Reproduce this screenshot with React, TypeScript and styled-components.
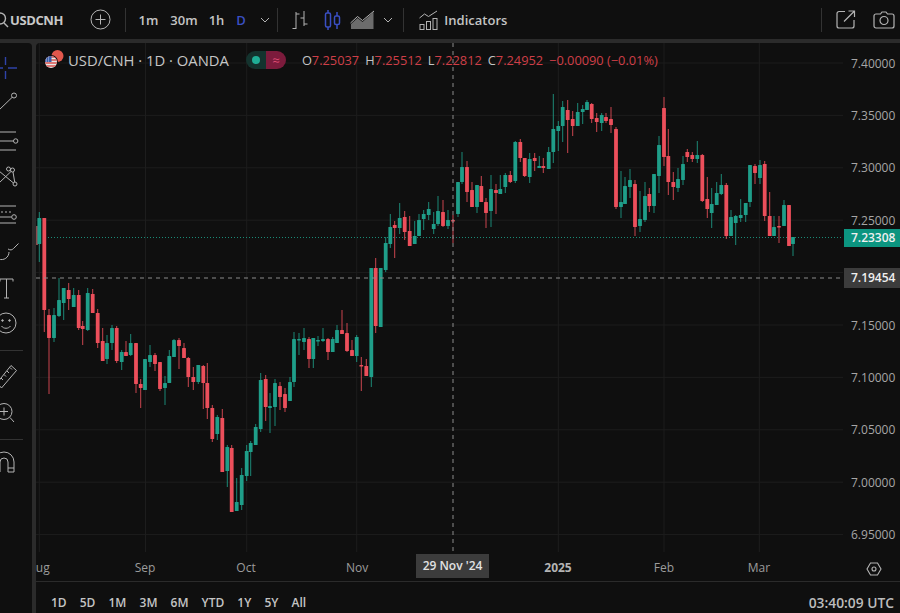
import React from "react";
import styled, { createGlobalStyle } from "styled-components";

const FONT = `"Open Sans", "Noto Sans", "Liberation Sans", sans-serif`;
const GREEN = "#1f9e89";
const RED = "#ec4f5b";
const ICON = "#b4b4b4";
const BLUE = "#3a4fc4";

const GlobalStyle = createGlobalStyle`
  html, body { margin: 0; padding: 0; background: #2b2b2b; }
  * { box-sizing: border-box; }
`;

const Page = styled.div`
  width: 900px;
  height: 613px;
  overflow: hidden;
  display: flex;
  flex-direction: column;
  gap: 4px;
  background: #2b2b2b;
  font-family: ${FONT};
  color: #c4c4c4;
`;

const TopBar = styled.header`
  height: 39px;
  flex: none;
  display: flex;
  align-items: center;
  background: #0f0f0f;
  overflow: hidden;
`;

const SearchClip = styled.svg`
  width: 10px;
  height: 18px;
  flex: none;
`;

const Symbol = styled.span`
  font-size: 13px;
  font-weight: 700;
  letter-spacing: -0.4px;
  color: #c8c8c8;
  width: 79px;
  flex: none;
`;

const IconButton = styled.button<{ $w: number; $mr?: number }>`
  all: unset;
  display: flex;
  align-items: center;
  justify-content: center;
  flex: none;
  width: ${(p) => p.$w}px;
  height: 39px;
  margin-right: ${(p) => p.$mr ?? 0}px;
`;

const Divider = styled.div<{ $mr: number }>`
  width: 1px;
  height: 24px;
  flex: none;
  background: #333;
  margin-right: ${(p) => p.$mr}px;
`;

const Interval = styled.span<{ $active?: boolean; $mr: number }>`
  font-size: 13px;
  font-weight: 600;
  flex: none;
  margin-right: ${(p) => p.$mr}px;
  color: ${(p) => (p.$active ? BLUE : "#c4c4c4")};
`;

const IndicatorsLabel = styled.span`
  font-size: 13px;
  font-weight: 600;
  color: #c4c4c4;
  flex: none;
`;

const Spacer = styled.div`
  flex: 1;
`;

const Body = styled.div`
  flex: 1;
  min-height: 0;
  display: flex;
  gap: 4px;
`;

const ToolBar = styled.nav`
  width: 32px;
  flex: none;
  background: #0f0f0f;
  border-radius: 0 4px 0 0;
  overflow: hidden;
  padding-top: 6.75px;
  display: flex;
  flex-direction: column;
`;

const ToolSlot = styled.svg`
  width: 32px;
  height: 36.5px;
  flex: none;
  display: block;
  overflow: hidden;
`;

const ToolDivider = styled.div`
  width: 23px;
  height: 1px;
  flex: none;
  margin: 8px 0 7px;
  background: #333;
`;

const ChartColumn = styled.main`
  flex: 1;
  min-width: 0;
  display: flex;
  flex-direction: column;
  background: #0f0f0f;
  border-radius: 4px 0 0 0;
  overflow: hidden;
`;

const ChartRow = styled.div`
  height: 509px;
  flex: none;
  display: flex;
`;

const Plot = styled.div`
  width: 807px;
  flex: none;
  position: relative;
`;

const PlotSvg = styled.svg`
  display: block;
  width: 807px;
  height: 509px;
`;

const Legend = styled.div`
  position: absolute;
  left: 8px;
  top: 7px;
  height: 20px;
  display: flex;
  align-items: center;
`;

const LegendTitle = styled.span`
  font-size: 14.8px;
  color: #c6c6c6;
  margin: 0 17px 0 4px;
  white-space: nowrap;
`;

const StatusPill = styled.div`
  width: 40px;
  height: 18px;
  border-radius: 9px;
  overflow: hidden;
  display: flex;
  margin-right: 16px;
  flex: none;
`;

const PillGreen = styled.div`
  width: 20px;
  background: #14332e;
  display: flex;
  align-items: center;
  justify-content: center;
`;

const PillDot = styled.i`
  width: 8px;
  height: 8px;
  border-radius: 50%;
  background: #1fae96;
`;

const PillRed = styled.div`
  flex: 1;
  background: #7c1b3c;
  color: #dc4a72;
  font-size: 13px;
  line-height: 18px;
  text-align: center;
`;

const Ohlc = styled.span`
  font-size: 12.8px;
  white-space: nowrap;
  margin-right: 6px;
  color: #c4c4c4;
`;

const OhlcValue = styled.span`
  color: #cf3f48;
`;

const PriceAxis = styled.aside`
  width: 57px;
  flex: none;
  position: relative;
  padding-top: 9.6px;
`;

const PriceTick = styled.div`
  height: 52.4px;
  line-height: 22px;
  padding-left: 8px;
  font-size: 12px;
  color: #a6a6a6;
`;

const PriceBadge = styled.div<{ $bg: string; $top: number; $h: number }>`
  position: absolute;
  left: 1px;
  right: 0;
  top: ${(p) => p.$top}px;
  height: ${(p) => p.$h}px;
  line-height: ${(p) => p.$h}px;
  padding-left: 7px;
  font-size: 12px;
  font-weight: 600;
  color: #f0f0f0;
  background: ${(p) => p.$bg};
`;

const TimeAxis = styled.div`
  height: 30px;
  flex: none;
  position: relative;
  border-bottom: 1px solid #2b2b2b;
`;

const TimeTick = styled.span<{ $strong?: boolean }>`
  position: absolute;
  top: 7px;
  transform: translateX(-50%);
  font-size: 12px;
  line-height: 18px;
  color: ${(p) => (p.$strong ? "#b4b4b4" : "#9c9c9c")};
  font-weight: ${(p) => (p.$strong ? 700 : 400)};
`;

const TimeTag = styled.span`
  position: absolute;
  left: 380px;
  top: 2px;
  width: 73px;
  height: 24px;
  line-height: 24px;
  text-align: center;
  font-size: 12px;
  font-weight: 600;
  color: #e2e2e2;
  background: #3c3c3c;
`;

const SettingsIcon = styled.svg`
  position: absolute;
  left: 830px;
  top: 9px;
  width: 16px;
  height: 16px;
`;

const BottomBar = styled.footer`
  height: 30px;
  flex: none;
  display: flex;
  align-items: center;
  padding: 10px 6px 0 15px;
  gap: 13.1px;
`;

const Range = styled.span`
  font-size: 12px;
  font-weight: 600;
  color: #c4c4c4;
`;

const Clock = styled.span`
  margin-left: auto;
  font-size: 13.8px;
  font-weight: 600;
  color: #bcbcbc;
`;

// [x, high, body top, body bottom, low, up?] in page pixels, read off the picture
type Candle = [number, number, number, number, number, number];

const CANDLES: Candle[] = [
  [39.3, 212, 218, 244, 262, 1], [44.3, 218, 218, 310, 332, 0], [49, 309, 315, 338, 394, 0], [54, 308, 315, 338, 342, 1],
  [59, 278, 300, 316, 317, 1], [63.7, 288, 288, 303, 320, 1], [68.7, 283, 290, 299, 310, 0], [73.7, 288, 295, 307, 307, 1],
  [78.7, 290, 295, 328, 330, 0], [82.7, 321, 326, 329, 345, 0], [87.7, 288, 293, 330, 331, 1], [92.7, 289, 294, 313, 313, 0],
  [97.7, 309, 313, 343, 348, 0], [102.7, 328, 341, 361, 361, 0], [107, 335, 343, 359, 364, 1], [112, 325, 328, 343, 350, 1],
  [116.7, 326, 328, 361, 363, 0], [121.7, 350, 352, 362, 370, 1], [126, 341, 352, 356, 356, 0], [130.7, 334, 343, 355, 356, 1],
  [136, 343, 343, 384, 393, 0], [140.7, 379, 384, 388, 408, 0], [145, 359, 359, 390, 390, 1], [150, 345, 355, 362, 367, 1],
  [155, 353, 355, 364, 371, 0], [160, 362, 362, 389, 391, 0], [165, 376, 383, 388, 405, 1], [169.3, 350, 356, 383, 383, 1],
  [174, 339, 340, 357, 357, 1], [179, 338, 340, 346, 369, 0], [184, 343, 348, 358, 358, 0], [188.3, 357, 358, 377, 387, 0],
  [193.3, 367, 377, 382, 390, 0], [198.3, 365, 365, 382, 384, 1], [203.3, 365, 366, 383, 409, 0], [207.3, 363, 383, 408, 419, 0],
  [212.3, 405, 408, 439, 442, 0], [217.3, 415, 417, 434, 440, 1], [222.3, 409, 418, 472, 472, 0], [227.3, 445, 447, 471, 487, 1],
  [231.7, 445, 448, 512, 512, 0], [236.7, 478, 502, 511, 511, 1], [241.7, 468, 475, 505, 510, 1], [246.7, 445, 451, 476, 481, 1],
  [250.7, 441, 443, 452, 476, 1], [255.7, 424, 427, 445, 445, 1], [260.7, 373, 380, 429, 432, 1], [265.7, 375, 379, 407, 421, 0],
  [270, 393, 406, 408, 433, 1], [275, 379, 383, 407, 426, 1], [280, 382, 386, 397, 410, 0], [285, 388, 394, 408, 412, 0],
  [290, 377, 382, 401, 401, 1], [294, 332, 339, 382, 387, 1], [299, 333, 339, 340, 355, 1], [304, 328, 338, 342, 350, 1],
  [309, 337, 339, 359, 368, 0], [313.3, 338, 338, 359, 368, 1], [318, 336, 340, 341, 346, 1], [323, 328, 339, 341, 342, 1],
  [328, 338, 339, 352, 360, 0], [332.7, 337, 339, 352, 352, 1], [337, 325, 330, 343, 343, 1], [342, 310, 330, 334, 334, 0],
  [347, 323, 333, 351, 352, 0], [352, 340, 350, 356, 356, 0], [356.7, 335, 337, 356, 362, 1], [361.3, 357, 365, 366, 391, 0],
  [366.3, 359, 366, 376, 376, 0], [371.3, 268, 268, 377, 387, 1], [375.7, 258, 268, 326, 333, 0], [380.7, 268, 268, 327, 327, 1],
  [385.7, 237, 243, 270, 272, 1], [390.3, 214, 227, 244, 248, 1], [394.7, 221, 225, 228, 258, 0], [399.7, 203, 218, 228, 234, 1],
  [404.7, 211, 217, 232, 240, 0], [409.7, 216, 231, 246, 246, 0], [414.7, 221, 236, 244, 244, 1], [419, 214, 220, 236, 236, 1],
  [423.7, 210, 214, 219, 230, 1], [428.7, 202, 209, 215, 220, 1], [433.7, 212, 224, 229, 234, 1], [438, 196, 211, 224, 226, 1],
  [443, 200, 212, 226, 227, 0], [448, 210, 220, 226, 229, 1], [453, 215, 220, 221, 243, 0], [458, 182, 182, 214, 217, 1],
  [462, 152, 167, 182, 184, 1], [467, 161, 167, 192, 202, 0], [472, 182, 190, 207, 207, 0], [477, 185, 185, 207, 213, 1],
  [481.3, 176, 186, 202, 202, 0], [486, 198, 202, 213, 228, 0], [491, 175, 189, 211, 227, 1], [496, 184, 190, 193, 214, 0],
  [500.3, 175, 189, 194, 194, 1], [505.3, 173, 175, 187, 193, 1], [510.3, 171, 175, 182, 183, 0], [515.3, 141, 142, 181, 183, 1],
  [520.3, 139, 142, 158, 162, 0], [524.7, 158, 158, 176, 177, 0], [529.7, 153, 159, 177, 183, 1], [534.7, 153, 158, 161, 171, 0],
  [539.3, 156, 166, 168, 168, 1], [543.3, 158, 166, 168, 173, 0], [548.7, 147, 152, 169, 169, 1], [553.3, 94, 129, 152, 163, 1],
  [558.3, 121, 126, 131, 151, 1], [562.7, 101, 107, 126, 142, 1], [567.7, 100, 110, 120, 153, 0], [572.7, 111, 119, 126, 136, 0],
  [577.7, 103, 112, 126, 126, 1], [582.7, 105, 109, 112, 124, 1], [587, 100, 102, 110, 110, 1], [591.7, 103, 104, 119, 123, 0],
  [596.7, 113, 118, 122, 132, 0], [601.7, 113, 115, 123, 131, 1], [606, 113, 117, 121, 123, 0], [611, 107, 119, 125, 133, 0],
  [616, 127, 129, 207, 209, 0], [621, 171, 202, 207, 218, 1], [625, 177, 186, 204, 204, 1], [630, 169, 180, 187, 198, 1],
  [635, 180, 184, 227, 236, 0], [640, 191, 219, 226, 232, 1], [645, 182, 196, 220, 222, 1], [649.3, 188, 194, 206, 212, 0],
  [654, 174, 174, 206, 213, 1], [659, 136, 145, 176, 193, 1], [664, 97, 108, 157, 166, 0], [668.3, 129, 156, 182, 195, 0],
  [673.3, 172, 182, 187, 200, 0], [678, 168, 179, 188, 192, 1], [683, 156, 164, 180, 185, 1], [687.3, 149, 152, 157, 162, 0],
  [692.3, 152, 155, 159, 162, 0], [697.3, 141, 155, 159, 163, 1], [702.3, 154, 155, 201, 202, 0], [707.3, 177, 199, 209, 218, 0],
  [711.7, 188, 204, 213, 228, 1], [716.7, 182, 193, 205, 205, 1], [721.3, 174, 185, 194, 195, 1], [726.3, 183, 185, 236, 239, 0],
  [731, 210, 217, 236, 236, 1], [735.7, 215, 216, 223, 245, 1], [740.7, 199, 215, 218, 222, 1], [745.7, 203, 203, 215, 222, 1],
  [750, 165, 165, 202, 207, 1], [755, 164, 166, 173, 184, 0], [760, 160, 165, 178, 184, 1], [764.7, 161, 164, 216, 221, 0],
  [769.7, 192, 216, 236, 236, 0], [774, 216, 227, 236, 236, 1], [779, 216, 226, 227, 243, 0], [784, 200, 205, 226, 226, 1],
  [789, 205, 205, 246, 246, 0], [793, 237, 237, 244, 256, 1],
];

// 7.20000 sits behind the crosshair label, so its tick stays empty
const PRICE_TICKS = ["7.40000", "7.35000", "7.30000", "7.25000", "", "7.15000", "7.10000", "7.05000", "7.00000", "6.95000"];
const GRID_Y = PRICE_TICKS.map((_, i) => 63 + i * 52.4);
const GRID_X = [39.3, 145.5, 246.7, 356.7, 558.3, 664, 759.3];

const TIME_TICKS = [
  { label: "Aug", x: 39 },
  { label: "Sep", x: 145 },
  { label: "Oct", x: 246 },
  { label: "Nov", x: 357 },
  { label: "2025", x: 558, strong: true },
  { label: "Feb", x: 664 },
  { label: "Mar", x: 759 },
];

const RANGES = ["1D", "5D", "1M", "3M", "6M", "YTD", "1Y", "5Y", "All"];

const ChartDrawing = () => (
  <PlotSvg viewBox="36 43 807 509">
    {GRID_Y.map((y) => (
      <line key={y} x1={36} x2={843} y1={y} y2={y} stroke="#1d1d1d" />
    ))}
    {GRID_X.map((x) => (
      <line key={x} x1={x} x2={x} y1={43} y2={552} stroke="#1d1d1d" />
    ))}
    <line x1={48} x2={843} y1={237.5} y2={237.5} stroke="#1a8a76" strokeDasharray="1 2" />
    <rect x={35} y={226} width={3} height={19} fill="#8a4a4e" />
    {CANDLES.map(([x, hi, top, bot, lo, up]) => {
      const c = up ? GREEN : RED;
      return (
        <g key={x}>
          <line x1={x} x2={x} y1={hi} y2={lo} stroke={c} strokeWidth={1} opacity={0.85} />
          <rect x={x - 1.9} y={top} width={3.8} height={Math.max(bot - top, 1.4)} rx={0.5} fill={c} />
        </g>
      );
    })}
    <line x1={36} x2={843} y1={278} y2={278} stroke="#8c8c8c" strokeDasharray="4 4" />
    <line x1={453} x2={453} y1={43} y2={552} stroke="#8c8c8c" strokeDasharray="4 4" />
  </PlotSvg>
);

const Flag = () => (
  <svg width="20" height="20" viewBox="0 0 20 20" style={{ flex: "none" }}>
    <circle cx="13.5" cy="6" r="6" fill="#e2574c" />
    <circle cx="7" cy="12" r="7" fill="#0f0f0f" />
    <clipPath id="flagClip">
      <circle cx="7" cy="12" r="6" />
    </clipPath>
    <g clipPath="url(#flagClip)">
      <rect x="0" y="5" width="14" height="14" fill="#e8e8e8" />
      <path d="M0 7h14M0 10h14M0 13h14M0 16h14" stroke="#d9534f" strokeWidth="1.4" />
      <rect x="0" y="5" width="7.5" height="7" fill="#3a5ea8" />
      <path d="M2 7h4M2 9h4M2 11h4" stroke="#dfe6f5" strokeWidth="0.8" strokeDasharray="1 1" />
    </g>
  </svg>
);

const SW = { fill: "none", stroke: ICON, strokeWidth: 1 };

export default function App() {
  return (
    <Page>
      <GlobalStyle />
      <TopBar>
        <SearchClip viewBox="0 0 10 18">
          <circle cx="0" cy="7.5" r="5.5" {...SW} strokeWidth={1.4} />
          <path d="M4 12l4 4" {...SW} strokeWidth={1.4} />
        </SearchClip>
        <Symbol>USDCNH</Symbol>
        <IconButton $w={22} $mr={13.5}>
          <svg width="21" height="21" viewBox="0 0 21 21" {...SW}>
            <circle cx="10.5" cy="10.5" r="9.5" />
            <path d="M10.5 5.5v10M5.5 10.5h10" />
          </svg>
        </IconButton>
        <Divider $mr={13} />
        <Interval $mr={12}>1m</Interval>
        <Interval $mr={11}>30m</Interval>
        <Interval $mr={12}>1h</Interval>
        <Interval $active $mr={13}>D</Interval>
        <IconButton $w={12} $mr={6.5}>
          <svg width="10" height="6" viewBox="0 0 10 6" {...SW}>
            <path d="M1 1l4 4 4-4" />
          </svg>
        </IconButton>
        <Divider $mr={13} />
        <IconButton $w={18} $mr={15}>
          <svg width="17" height="20" viewBox="0 0 17 20" {...SW}>
            <path d="M4 2v17M0.5 18.5H4M4 4h3.5M12 1v15M12 8H8.5M12 14h3.5" />
          </svg>
        </IconButton>
        <IconButton $w={17} $mr={8}>
          <svg width="17" height="22" viewBox="0 0 17 22" fill="none" stroke={BLUE} strokeWidth="1.5">
            <rect x="1.5" y="4" width="5" height="14" rx="1.5" />
            <path d="M4 1v3M4 18v3" />
            <rect x="10.5" y="7" width="5" height="8.5" rx="1.5" />
            <path d="M13 3v4M13 15.5V20" />
          </svg>
        </IconButton>
        <IconButton $w={26} $mr={7}>
          <svg width="25" height="20" viewBox="0 0 25 20">
            <path d="M1 14l6.5-6 5 4 11-10v17H1z" fill="#6c6c6c" />
            <path d="M0.5 13l7-6.5 5 4L24 1" fill="none" stroke={ICON} />
          </svg>
        </IconButton>
        <IconButton $w={12} $mr={9}>
          <svg width="10" height="6" viewBox="0 0 10 6" {...SW}>
            <path d="M1 1l4 4 4-4" />
          </svg>
        </IconButton>
        <Divider $mr={15} />
        <IconButton $w={19} $mr={6}>
          <svg width="19" height="20" viewBox="0 0 19 20" {...SW}>
            <path d="M0.5 8l5-4 4 2.5L18 1" />
            <rect x="1" y="14.5" width="4" height="5" />
            <rect x="7.5" y="11.5" width="4" height="8" />
            <rect x="14" y="8.5" width="4" height="11" />
          </svg>
        </IconButton>
        <IndicatorsLabel>Indicators</IndicatorsLabel>
        <Spacer />
        <Divider $mr={14} />
        <IconButton $w={20} $mr={17}>
          <svg width="20" height="19" viewBox="0 0 20 19" fill="none" stroke={ICON} strokeWidth="1.2">
            <path d="M9 1.5H3a2 2 0 0 0-2 2V16a2 2 0 0 0 2 2h13a2 2 0 0 0 2-2v-6" />
            <path d="M8 11.5L18.5 1M12.5 1h6v6" />
          </svg>
        </IconButton>
        <IconButton $w={22} $mr={5}>
          <svg width="22" height="18" viewBox="0 0 22 18" fill="none" stroke={ICON} strokeWidth="1.2">
            <path d="M7.5 3l1.5-2h4l1.5 2H19a2 2 0 0 1 2 2v10a2 2 0 0 1-2 2H3a2 2 0 0 1-2-2V5a2 2 0 0 1 2-2z" />
            <circle cx="11" cy="9.5" r="4" />
          </svg>
        </IconButton>
      </TopBar>
      <Body>
        <ToolBar>
          <ToolSlot viewBox="0 0 32 36.5" fill="none" stroke="#2f43a8" strokeWidth="1.4">
            <path d="M5.5 7v8M5.5 21v8M-2 18h5M8 18h9" />
          </ToolSlot>
          <ToolSlot viewBox="0 0 32 36.5" {...SW}>
            <circle cx="14" cy="9.5" r="2.5" />
            <path d="M12.2 11.3L-1 24" />
          </ToolSlot>
          <ToolSlot viewBox="0 0 32 36.5" {...SW}>
            <path d="M0 9h16M0 18h13.5M0 27h16" />
            <circle cx="15.7" cy="18" r="2.2" />
          </ToolSlot>
          <ToolSlot viewBox="0 0 32 36.5" {...SW}>
            <circle cx="8.5" cy="10" r="2" />
            <circle cx="12.5" cy="11" r="2" />
            <circle cx="15" cy="25" r="2" />
            <path d="M-1 12L13.5 24M-1 24L11 12.5M13 13L14.7 23" />
          </ToolSlot>
          <ToolSlot viewBox="0 0 32 36.5" {...SW}>
            <path d="M0 10h16M0 27h16M0 21h11.5" />
            <path d="M1 16h10" strokeDasharray="2 2" />
            <circle cx="14" cy="21" r="2.3" />
          </ToolSlot>
          <ToolSlot viewBox="0 0 32 36.5" {...SW}>
            <path d="M8 17c2.5 1.5 4 1 5.5-.5L18.5 11.5" />
            <path d="M-4 15a7.5 7.5 0 1 0 13 5" />
          </ToolSlot>
          <ToolSlot viewBox="0 0 32 36.5" {...SW}>
            <path d="M0 10h13M6.5 10v19M4 29h5M0 10v2.5M13 10v2.5" />
          </ToolSlot>
          <ToolSlot viewBox="0 0 32 36.5" {...SW}>
            <circle cx="6" cy="18" r="10" />
            <circle cx="2.5" cy="15.5" r="0.8" fill={ICON} />
            <circle cx="9.5" cy="15.5" r="0.8" fill={ICON} />
            <path d="M1.5 21c2 3 7 3 9 0" />
          </ToolSlot>
          <ToolDivider />
          <ToolSlot viewBox="0 0 32 36.5" {...SW}>
            <path d="M-3 25L11 7.5l5.5 5L1.5 30z" />
            <path d="M1 20l2 2M4 16.5l2 2M7 13l2 2M10 9.5l2 2" />
          </ToolSlot>
          <ToolSlot viewBox="0 0 32 36.5" {...SW}>
            <circle cx="4" cy="17.5" r="8" />
            <path d="M10 23.5L14 28M4 13.5v8M0 17.5h8" />
          </ToolSlot>
          <ToolDivider />
          <ToolSlot viewBox="0 0 32 36.5" {...SW}>
            <path d="M-6 25V15a10 10 0 0 1 20 0v10h-6V15a4 4 0 0 0-8 0v10z" />
            <path d="M8 21h6M-6 21h6" />
          </ToolSlot>
        </ToolBar>
        <ChartColumn>
          <ChartRow>
            <Plot>
              <ChartDrawing />
              <Legend>
                <Flag />
                <LegendTitle>USD/CNH · 1D · OANDA</LegendTitle>
                <StatusPill>
                  <PillGreen>
                    <PillDot />
                  </PillGreen>
                  <PillRed>≈</PillRed>
                </StatusPill>
                <Ohlc>O<OhlcValue>7.25037</OhlcValue></Ohlc>
                <Ohlc>H<OhlcValue>7.25512</OhlcValue></Ohlc>
                <Ohlc>L<OhlcValue>7.22812</OhlcValue></Ohlc>
                <Ohlc>C<OhlcValue>7.24952</OhlcValue></Ohlc>
                <Ohlc><OhlcValue>−0.00090 (−0.01%)</OhlcValue></Ohlc>
              </Legend>
            </Plot>
            <PriceAxis>
              {PRICE_TICKS.map((p, i) => (
                <PriceTick key={i}>{p}</PriceTick>
              ))}
              <PriceBadge $bg="#0c9580" $top={186} $h={18}>7.23308</PriceBadge>
              <PriceBadge $bg="#3c3c3c" $top={225} $h={20}>7.19454</PriceBadge>
            </PriceAxis>
          </ChartRow>
          <TimeAxis>
            {TIME_TICKS.map((t) => (
              <TimeTick key={t.label} $strong={t.strong} style={{ left: t.x - 36 }}>
                {t.label}
              </TimeTick>
            ))}
            <TimeTag>29 Nov '24</TimeTag>
            <SettingsIcon viewBox="0 0 16 16" {...SW} strokeWidth={1.1}>
              <path d="M4.5 2h7L15 8l-3.5 6h-7L1 8z" />
              <circle cx="8" cy="8" r="2" />
            </SettingsIcon>
          </TimeAxis>
          <BottomBar>
            {RANGES.map((r) => (
              <Range key={r}>{r}</Range>
            ))}
            <Clock>03:40:09 UTC</Clock>
          </BottomBar>
        </ChartColumn>
      </Body>
    </Page>
  );
}
